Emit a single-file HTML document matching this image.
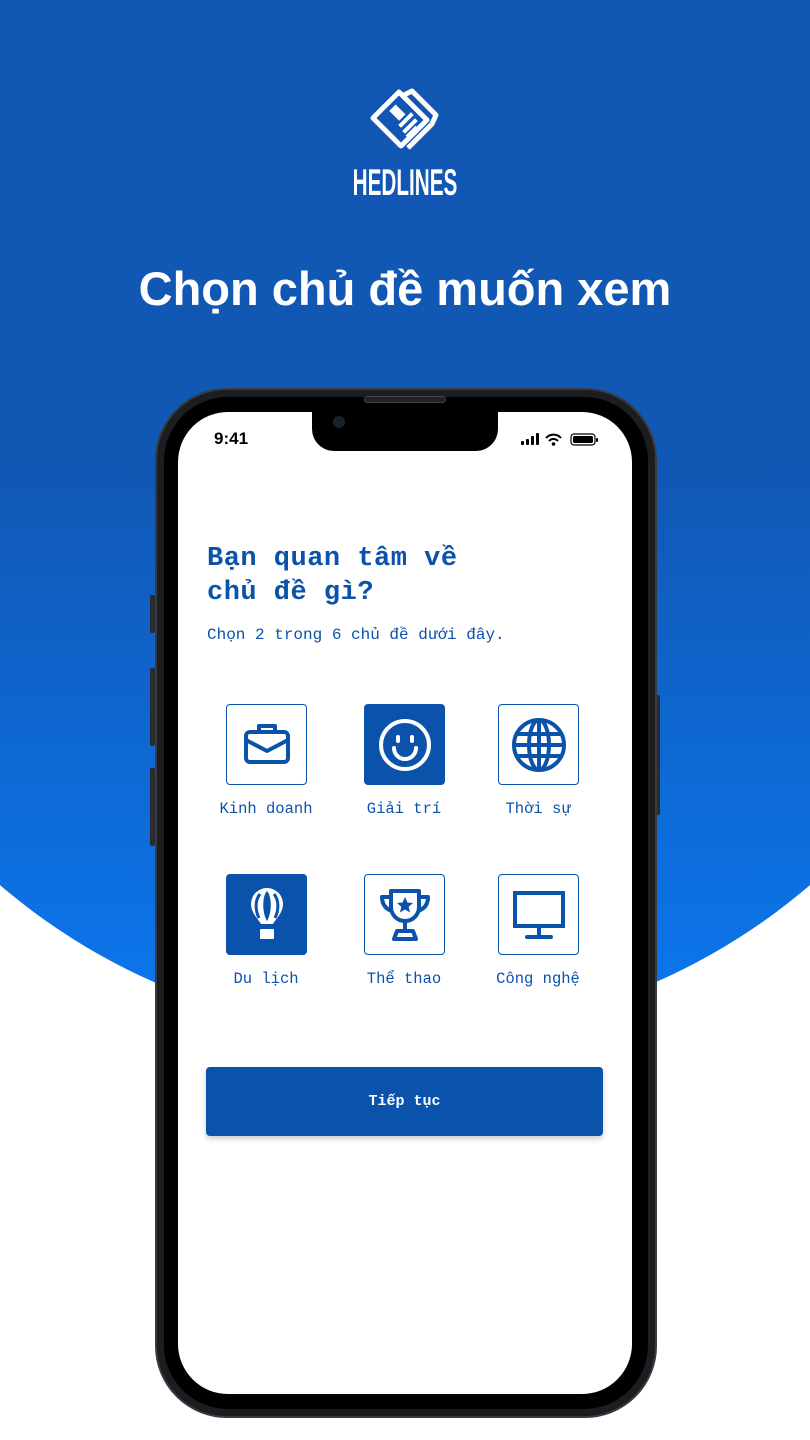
<!DOCTYPE html>
<html><head><meta charset="utf-8"><style>
*{margin:0;padding:0;box-sizing:border-box}
body{width:810px;height:1440px;background:#fff;position:relative;overflow:hidden;font-family:"Liberation Sans",sans-serif}
.bg2{position:absolute;left:-217px;top:-209px;width:1244px;height:1244px;border-radius:50%;background:linear-gradient(180deg,#1155b0 0%,#1158b5 55%,#0b78f0 100%)}
.top{position:absolute;left:0;top:0;width:810px;height:420px;background:#1155b0}
.brand{position:absolute;left:0;width:810px;top:162px;text-align:center;color:#fff;font-family:"Liberation Sans Narrow","Liberation Sans",sans-serif;font-weight:bold;font-size:37px;transform:scaleX(0.56)}
.title{position:absolute;left:0;width:810px;top:261px;text-align:center;color:#fff;font-weight:bold;font-size:47px}
.phone{position:absolute;left:155px;top:388px;width:502px;height:1030px;border-radius:72px;background:#1c1d20;border:2px solid #3a3b40}
.inner{position:absolute;left:164px;top:397px;width:484px;height:1012px;border-radius:64px;background:#000}
.screen{position:absolute;left:178px;top:412px;width:454px;height:982px;border-radius:50px;background:#fff;overflow:hidden}
.notch{position:absolute;left:134px;top:-2px;width:186px;height:41px;background:#000;border-radius:0 0 22px 22px}
.speaker{position:absolute;left:364px;top:396px;width:82px;height:7px;border-radius:4px;background:#222;border:1px solid #444}
.time{position:absolute;left:36px;top:17px;font-size:17px;font-weight:bold;color:#000}
.mono{font-family:"Liberation Mono","DejaVu Sans Mono",monospace;color:#0b52ab}
.h{position:absolute;left:29px;top:130px;font-size:27px;font-weight:bold;line-height:34px;letter-spacing:0.5px}
.sub{position:absolute;left:29px;top:214px;font-size:16px}
.tile{position:absolute;width:81px;height:81px;border:1.5px solid #0b52ab;border-radius:4px;background:#fff;display:flex;align-items:center;justify-content:center}
.tile.on{background:#0b52ab}
.lbl{position:absolute;width:140px;text-align:center;font-size:15.5px}
.btn{position:absolute;left:28px;top:655px;width:397px;height:69px;background:#0b52ab;border-radius:4px;box-shadow:0 3px 6px rgba(0,0,0,.2);color:#fff;font-weight:bold;font-size:15px;text-align:center;line-height:69px}
.side{position:absolute;width:5px;background:#2a2b2e;border-radius:2px}
</style></head><body>
<div class="top"></div>
<div class="bg2"></div>
<svg style="position:absolute;left:368px;top:86px" width="74" height="72" viewBox="0 0 74 72">
<g fill="none" stroke="#fff" stroke-width="5" stroke-linejoin="round">
<path d="M5 32 L31 6 L59 34 L33 60 Z"/>
<path d="M36 9 L44 5 L68 29 L64 38 L40 62"/>
</g>
<g fill="#fff">
<rect x="22" y="22" width="14" height="9" transform="rotate(45 29 27)"/>
<rect x="29" y="32" width="18" height="4" transform="rotate(-45 38 34)"/>
<rect x="33" y="38" width="18" height="4" transform="rotate(-45 42 40)"/>
<rect x="37" y="44" width="14" height="4" transform="rotate(-45 44 46)"/>
</g>
</svg>
<div class="brand">HEDLINES</div>
<div class="title">Chọn chủ đề muốn xem</div>

<div class="side" style="left:150px;top:595px;height:38px"></div>
<div class="side" style="left:150px;top:668px;height:78px"></div>
<div class="side" style="left:150px;top:768px;height:78px"></div>
<div class="side" style="left:655px;top:695px;height:120px"></div>
<div class="phone"></div>
<div class="inner"></div>
<div class="screen">
<div class="notch"><div style="position:absolute;left:21px;top:6px;width:12px;height:12px;border-radius:50%;background:#1a2030"></div></div>
<div class="time">9:41</div>
<svg style="position:absolute;left:343px;top:21px" width="80" height="14" viewBox="0 0 80 14">
<g fill="#000"><rect x="0" y="8" width="3" height="4" rx="1"/><rect x="5" y="6" width="3" height="6" rx="1"/><rect x="10" y="3" width="3" height="9" rx="1"/><rect x="15" y="0" width="3" height="12" rx="1"/></g>
<path d="M25 5 A10 10 0 0 1 40 5 M28 8 A6 6 0 0 1 37 8" stroke="#000" stroke-width="2" fill="none"/><circle cx="32.5" cy="11" r="1.8"/>
<rect x="50" y="1" width="24" height="11" rx="3" fill="none" stroke="#000" stroke-width="1.2"/><rect x="52" y="3" width="20" height="7" rx="1.5" fill="#000"/><rect x="75" y="5" width="2" height="4" rx="1" fill="#000"/>
</svg>
<div class="h mono">Bạn quan tâm về<br>chủ đề gì?</div>
<div class="sub mono">Chọn 2 trong 6 chủ đề dưới đây.</div>

<div class="tile" style="left:48px;top:292px"><svg width="50" height="50" viewBox="0 0 50 50" fill="none" stroke="#0b52ab" stroke-width="4" stroke-linejoin="round"><rect x="4" y="12" width="42" height="30" rx="4"/><path d="M17 12V6h16v6M4 20l21 11 21-11"/></svg></div>
<div class="tile on" style="left:186px;top:292px"><svg width="56" height="56" viewBox="0 0 56 56" fill="none" stroke="#fff" stroke-width="4" stroke-linecap="round"><circle cx="28" cy="28" r="24"/><path d="M21 20v4M35 20v4M17 31a11 11 0 0 0 22 0"/></svg></div>
<div class="tile" style="left:320px;top:292px"><svg width="56" height="56" viewBox="0 0 56 56" fill="none" stroke="#0b52ab" stroke-width="4"><circle cx="28" cy="28" r="25"/><ellipse cx="28" cy="28" rx="10" ry="25"/><path d="M28 3v50M3 28h50M7 17h42M7 39h42"/></svg></div>
<div class="lbl mono" style="left:18px;top:388px">Kinh doanh</div>
<div class="lbl mono" style="left:156px;top:388px">Giải trí</div>
<div class="lbl mono" style="left:290px;top:388px">Thời sự</div>

<div class="tile on" style="left:48px;top:462px"><svg width="40" height="60" viewBox="0 0 40 60" fill="#fff"><path d="M20 3a16 16 0 0 1 16 16c0 9-8 16-10 20H14C12 35 4 28 4 19A16 16 0 0 1 20 3z"/><path d="M20 6c-5 5-5 22 0 30c5-8 5-25 0-30z" fill="#0b52ab"/><path d="M13 9c-5 6-5 16 -1 24" stroke="#0b52ab" stroke-width="3" fill="none"/><path d="M27 9c5 6 5 16 1 24" stroke="#0b52ab" stroke-width="3" fill="none"/><rect x="13" y="44" width="14" height="10" rx="1"/></svg></div>
<div class="tile" style="left:186px;top:462px"><svg width="56" height="56" viewBox="0 0 56 56" fill="none" stroke="#0b52ab" stroke-width="4" stroke-linejoin="round"><path d="M14 4h28v16a14 14 0 0 1-28 0z"/><path d="M14 10H5c0 8 4 12 10 14M42 10h9c0 8-4 12-10 14M28 34v10M17 52l3-8h16l3 8z" fill="none"/><path d="M28 10l2.5 5.5 5.5.5-4.3 3.8 1.3 5.7L28 22.5 23 25.5l1.3-5.7L20 16l5.5-.5z" fill="#0b52ab" stroke="none"/></svg></div>
<div class="tile" style="left:320px;top:462px"><svg width="56" height="52" viewBox="0 0 56 52" fill="none" stroke="#0b52ab" stroke-width="4"><rect x="4" y="4" width="48" height="33"/><path d="M28 37v10M16 48h24" stroke-linecap="round"/></svg></div>
<div class="lbl mono" style="left:18px;top:558px">Du lịch</div>
<div class="lbl mono" style="left:156px;top:558px">Thể thao</div>
<div class="lbl mono" style="left:290px;top:558px">Công nghệ</div>

<div class="btn mono" style="color:#fff">Tiếp tục</div>
</div>
<div class="speaker"></div>
</body></html>
